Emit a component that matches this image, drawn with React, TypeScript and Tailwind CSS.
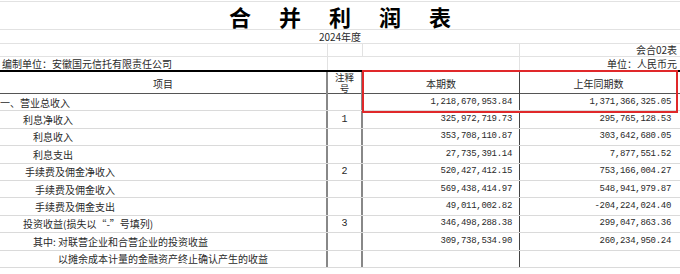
import React from "react";

type Row = {
  label: string;
  indent: number;
  note?: string;
  cur?: string;
  prev?: string;
};

const rows: Array<Row> = [
  { label: "一、营业总收入", indent: 0, cur: "1,218,670,953.84", prev: "1,371,366,325.05" },
  { label: "利息净收入", indent: 23, note: "1", cur: "325,972,719.73", prev: "295,765,128.53" },
  { label: "利息收入", indent: 33, cur: "353,708,110.87", prev: "303,642,680.05" },
  { label: "利息支出", indent: 33, cur: "27,735,391.14", prev: "7,877,551.52" },
  { label: "手续费及佣金净收入", indent: 25, note: "2", cur: "520,427,412.15", prev: "753,166,004.27" },
  { label: "手续费及佣金收入", indent: 35, cur: "569,438,414.97", prev: "548,941,979.87" },
  { label: "手续费及佣金支出", indent: 35, cur: "49,011,002.82", prev: "-204,224,024.40" },
  { label: "投资收益(损失以\u201c-\u201d号填列)", indent: 23, note: "3", cur: "346,498,288.38", prev: "299,047,863.36" },
  { label: "其中: 对联营企业和合营企业的投资收益", indent: 33, cur: "309,738,534.90", prev: "260,234,950.24" },
  { label: "以摊余成本计量的金融资产终止确认产生的收益", indent: 58 },
];

const cjk = { fontFamily: '"Noto Sans CJK SC", "Liberation Sans", sans-serif' };
const mono = { fontFamily: '"Liberation Mono", "Noto Sans CJK SC", monospace' };

const App: React.FC = () => {
  return (
    <div
      className="w-[680px] h-[274px] overflow-hidden bg-white text-[#2a2a2a] relative"
      style={cjk}
    >
      {/* title */}
      <div className="mt-[1px] h-[29px] border-y border-[#e2e2e2] flex items-center justify-center">
        <span className="text-[22px] font-bold text-black tracking-[28px] pl-[28px] leading-[24px]">
          合并利润表
        </span>
      </div>
      <div className="h-[14px] border-b border-[#e2e2e2] flex items-center justify-center text-[10px] leading-[12px]">
        2024年度
      </div>
      <div className="h-[13px] border-b border-[#e2e2e2] grid grid-cols-[328px_35px_157px_160px] text-[10px] leading-none">
        <div className="border-r border-[#e2e2e2]" />
        <div className="border-r border-[#e2e2e2]" />
        <div className="border-r border-[#e2e2e2]" />
        <div className="flex items-center justify-end pr-[3px]">会合02表</div>
      </div>
      <div className="h-[13px] grid grid-cols-[328px_35px_157px_160px] text-[10px] leading-none">
        <div className="flex items-center pl-[2px] border-r border-[#e2e2e2]">
          编制单位：安徽国元信托有限责任公司
        </div>
        <div />
        <div className="border-r border-[#e2e2e2]" />
        <div className="flex items-center justify-end pr-[3px]">单位：人民币元</div>
      </div>

      {/* header */}
      <div className="h-[24px] grid grid-cols-[328px_35px_157px_160px] border-t-2 border-b border-t-black border-b-[#555] text-[10px]">
        <div className="flex items-center justify-center border-r-2 border-[#888]">项目</div>
        <div className="flex flex-col items-center justify-center leading-[11px] border-r-2 border-[#888] text-[9.5px]">
          <span>注释</span>
          <span>号</span>
        </div>
        <div className="flex items-center justify-center border-r border-[#444]">本期数</div>
        <div className="flex items-center justify-center pr-[3px]">上年同期数</div>
      </div>

      {/* body */}
      {rows.map((r) => (
        <div
          key={r.label}
          className="h-[17.4px] grid grid-cols-[328px_35px_157px_160px] border-b border-[#dadada] text-[10px] leading-none"
        >
          <div
            className="flex items-center pt-[1px] border-r-2 border-[#888] whitespace-nowrap"
            style={{ paddingLeft: r.indent }}
          >
            {r.label}
          </div>
          <div className="flex items-center justify-center border-r-2 border-[#888]" style={mono}>
            {r.note}
          </div>
          <div
            className="flex items-center justify-end pr-[7px] border-r border-[#444] text-[9px] tracking-[-0.3px]"
            style={mono}
          >
            {r.cur}
          </div>
          <div
            className="flex items-center justify-end pr-[9px] text-[9px] tracking-[-0.3px]"
            style={mono}
          >
            {r.prev}
          </div>
        </div>
      ))}

      {/* red highlight */}
      <div className="absolute left-[362px] top-[70px] w-[316px] h-[43px] border-2 border-[#e0282a] pointer-events-none" />
    </div>
  );
};

export default App;
